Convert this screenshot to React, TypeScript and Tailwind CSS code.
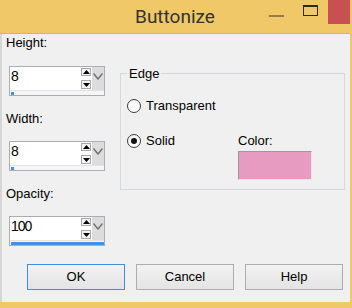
import React from 'react';

const ui = { fontFamily: '"Liberation Sans", Arial, sans-serif' };
const num = { fontFamily: '"Liberation Sans Narrow", "Liberation Sans", Arial, sans-serif' };

function Spinner({ value, fill }: { value: string; fill: number }) {
  return (
    <div className="ml-[3px] flex h-[30px] w-[96px] flex-col border border-[#abadb3] bg-white">
      <div className="flex h-[23px]">
        <div className="flex-1 pl-[1px] pt-[1px] text-[14px] leading-[16px] tracking-[-1px] text-black" style={num}>
          {value}
        </div>
        <div className="flex w-[11px] flex-col justify-between py-[1px]">
          <div className="flex h-[8px] w-[10px] items-center justify-center border border-[#a8a8a8] bg-[#f4f4f4]">
            <svg width="7" height="4" viewBox="0 0 7 4">
              <path d="M0 4 L3.5 0 L7 4 Z" fill="#000" />
            </svg>
          </div>
          <div className="flex h-[9px] w-[10px] items-center justify-center border border-[#a8a8a8] bg-[#f4f4f4]">
            <svg width="7" height="4" viewBox="0 0 7 4">
              <path d="M0 0 L7 0 L3.5 4 Z" fill="#000" />
            </svg>
          </div>
        </div>
        <div className="flex w-[12px] items-start justify-center bg-[#dcdcdc] pt-[6px]">
          <svg width="10" height="7" viewBox="0 0 10 7">
            <path d="M0.5 0.5 L5 6 L9.5 0.5" stroke="#6f6f6f" strokeWidth="1.4" fill="none" />
          </svg>
        </div>
      </div>
      <div className="h-[5px] border-t border-[#e2e2e2] bg-[#f6f6f6] pl-[1px] pt-[1px]">
        <div className="h-[3px] bg-[#3d93e8]" style={{ width: fill }} />
      </div>
    </div>
  );
}

function Radio({ label, checked }: { label: string; checked?: boolean }) {
  return (
    <div className="flex h-[15px] items-center gap-[5px]">
      <div className="flex h-[14px] w-[14px] items-center justify-center rounded-full border border-[#3a3a3a] bg-gradient-to-b from-[#f4f4f4] to-white">
        {checked && <div className="h-[6px] w-[6px] rounded-full bg-[#111]" />}
      </div>
      <span className="text-[13px] leading-[15px] text-black">{label}</span>
    </div>
  );
}

function Btn({ label, focused }: { label: string; focused?: boolean }) {
  return (
    <button
      className={
        focused
          ? 'h-[26px] w-[98px] border border-[#3d8ee6] bg-gradient-to-b from-[#f2f2f2] to-[#e4e4e4] text-[13px] text-black'
          : 'h-[26px] w-[98px] border border-[#adadad] bg-gradient-to-b from-[#f2f2f2] to-[#e4e4e4] text-[13px] text-black'
      }
      style={ui}
    >
      {label}
    </button>
  );
}

export default function App() {
  return (
    <div className="flex h-[308px] w-[352px] flex-col border-b-[6px] border-r-2 border-[#f0c868] bg-[#f0f0f0]" style={ui}>
      {/* title bar */}
      <div className="grid h-[34px] grid-cols-[1fr_auto_1fr] border-b border-[#d9b560] bg-[#f0c868]">
        <div />
        <div className="mt-[7px] text-[19px] leading-[20px] text-[#333]" style={{ fontFamily: 'Roboto, sans-serif' }}>
          Buttonize
        </div>
        <div className="flex justify-end">
          <div className="mt-[15px] h-[2px] w-[15px] bg-[#8f7d55]" />
          <div className="ml-[19px] mt-[5px] h-[11px] w-[15px] border border-t-[2px] border-[#2a2a2a]" />
          <div className="ml-[10px] h-[24px] w-[22px] bg-[#c75050]" />
        </div>
      </div>

      {/* body */}
      <div className="flex flex-1 flex-col border-l-2 border-[#d6d6d6]">
        <div className="flex pl-[4px]">
          <div className="flex w-[99px] flex-col pt-[1px]">
            <div className="text-[13px] leading-[15px] text-black">Height:</div>
            <div className="mt-[16px]">
              <Spinner value="8" fill={3} />
            </div>
            <div className="mt-[15px] text-[13px] leading-[15px] text-black">Width:</div>
            <div className="mt-[15px]">
              <Spinner value="8" fill={3} />
            </div>
            <div className="mt-[15px] text-[13px] leading-[15px] text-black">Opacity:</div>
            <div className="mt-[15px]">
              <Spinner value="100" fill={93} />
            </div>
          </div>

          <fieldset className="ml-[15px] mt-[32px] h-[124px] w-[225px] border border-[#d5d9dd]">
            <legend className="ml-[6px] px-[2px] text-[13px] leading-[15px] text-black">Edge</legend>
            <div className="mt-[17px] pl-[6px]">
              <Radio label="Transparent" />
            </div>
            <div className="mt-[20px] flex pl-[6px]">
              <div className="w-[111px]">
                <Radio label="Solid" checked />
              </div>
              <div className="flex flex-col">
                <div className="text-[13px] leading-[15px] text-black">Color:</div>
                <div className="mt-[3px] h-[29px] w-[74px] border border-[#9a9a9a] border-b-[#e6e6e6] border-r-[#e6e6e6] bg-[#e89bc0]" />
              </div>
            </div>
          </fieldset>
        </div>

        <div className="mt-auto flex gap-[11px] pb-[12px] pl-[25px]">
          <Btn label="OK" focused />
          <Btn label="Cancel" />
          <Btn label="Help" />
        </div>
      </div>
    </div>
  );
}
